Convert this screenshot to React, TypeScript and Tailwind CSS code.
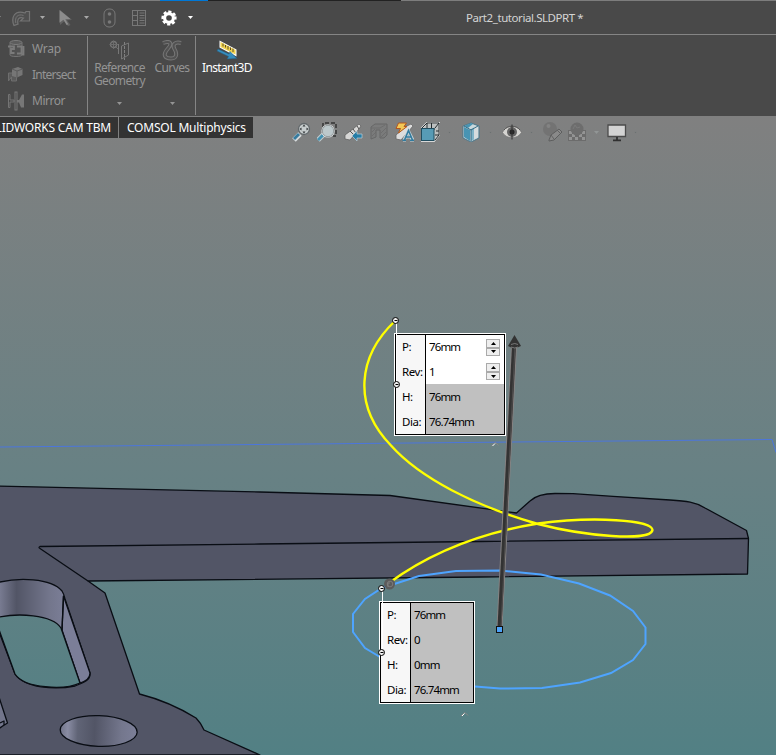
import React from "react";

type IconProps = { className?: string; children: React.ReactNode; w?: number; h?: number };

function Icon({ className = "", children, w = 20, h = 20 }: IconProps) {
  return (
    <svg width={w} height={h} viewBox={`0 0 ${w} ${h}`} className={`block shrink-0 ${className}`} fill="none">
      {children}
    </svg>
  );
}

function Caret({ className = "" }: { className?: string }) {
  return (
    <Icon w={5} h={3} className={className}>
      <path d="M0 0h5L2.5 3z" fill="currentColor" />
    </Icon>
  );
}

function QuickAccess() {
  return (
    <div className="flex h-full w-[220px] items-center">
      <div className="w-[1px] shrink-0 overflow-hidden text-[#999]"><Caret className="-ml-1" /></div>
      <Icon className="ml-[10px]">
        <path d="M3 17.500C-.5 9 4 1.500 14 5l1-1.500h3.500v9.500h-9l3-3C8 8.500 6 11 7 16z" fill="#505050" stroke="#747474" strokeWidth="1.200" />
        <path d="M4.800 15C3.500 9 7 5.500 12.500 7.500" stroke="#747474" />
      </Icon>
      <Caret className="ml-[9px] text-[#a8a8a8]" />
      <Icon className="ml-[11px]">
        <path d="M4 2l12 10-5 .2 3.500 4.800-2.500 1.300-3.300-5.300L4 17z" fill="#626262" />
        <path d="M3.500 2l11 9-5.200.2 3 5-1.700.8-3.200-5.200-3.900 3z" fill="#8c8c8c" />
      </Icon>
      <Caret className="ml-[8px] text-[#a8a8a8]" />
      <Icon className="ml-[11px]">
        <rect x="4" y="1" width="11" height="18" rx="5" stroke="#797979" />
        <circle cx="9.500" cy="6" r="1.800" fill="#797979" />
        <circle cx="9.500" cy="14" r="1.800" fill="#797979" />
      </Icon>
      <Icon className="ml-[10px]">
        <rect x="2.500" y="2.500" width="13" height="15" stroke="#777" />
        <path d="M7.500 2v16M3 7.500h5M3 12.500h5M9.500 5h5M9.500 7.500h5M9.500 10h5M9.500 12.500h5M9.500 15h5" stroke="#777" />
      </Icon>
      <Icon className="ml-[9px]">
        <circle cx="10" cy="10" r="6" fill="#fff" />
        <circle cx="10" cy="10" r="6.400" stroke="#fff" strokeWidth="2.400" strokeDasharray="3 2.027" transform="rotate(-13 10 10)" />
        <circle cx="10" cy="10" r="2.800" fill="#444" />
      </Icon>
      <Caret className="ml-[9px] text-white" />
    </div>
  );
}

function WrapIcon() {
  return (
    <Icon>
      <path d="M4 4v12c0 2 12 2 12 0V4" stroke="#747474" fill="#525252" />
      <ellipse cx="10" cy="3.500" rx="6" ry="2" stroke="#7c7c7c" fill="#5c5c5c" />
      <path d="M2 7.500h6v2.500H5v4h3.500M11 7.500h4.500v7H11M17.500 7v8.500h-2" stroke="#7b7b7b" strokeWidth="1.800" />
    </Icon>
  );
}

function IntersectIcon() {
  return (
    <Icon>
      <path d="M2.500 8h8v8h-5v-4l-3 4z" fill="#5b5b5b" stroke="#6e6e6e" />
      <path d="M6 4l6-2 4.500 2v6L11 12.500 6 11z" fill="#767676" />
      <path d="M6 4l5 2v6.500M11 6l5.500-2" stroke="#5a5a5a" />
    </Icon>
  );
}

function MirrorIcon() {
  return (
    <Icon>
      <path d="M2.500 3.500h1.500V9h4v2H4v5.500H2.500z" stroke="#747474" />
      <rect x="9" y="1" width="2" height="18" stroke="#797979" />
      <path d="M18 3.500v13h-3l-2-5h-2V9h2l3-5.500z" fill="#777" />
    </Icon>
  );
}

function ReferenceIcon() {
  return (
    <Icon w={22} h={21}>
      <circle cx="4.500" cy="4.500" r="3" stroke="#777" strokeWidth="1.300" />
      <path d="M0.500 4.500h8.500M4.500 0.500v8.500M7 7l3 3" stroke="#6c6c6c" />
      <path d="M9.500 4v10M19.500 3v12l-7 4V6z" stroke="#777" />
      <path d="M15.500 2v18" stroke="#808080" strokeDasharray="3 1" />
    </Icon>
  );
}

function CurvesIcon() {
  const curve = "M2 3C10 0 11 4 7 8.500C1 15 4 18.500 10 18.500C17 18.500 15.500 12 13.500 9C11 4.500 14 1.500 20 3";
  return (
    <Icon w={22} h={21}>
      <path d={curve} stroke="#777" strokeWidth="4" />
      <path d={curve} stroke="#525252" strokeWidth="2" />
    </Icon>
  );
}

function InstantIcon() {
  return (
    <Icon w={22} h={21}>
      <path d="M3.500 .5l17 9v7l-17-9z" fill="#fff" />
      <path d="M4.500 2L19.500 10v4.500L4.500 7z" fill="#f0d34f" />
      <path d="M7 3.500v3M9.500 5v2.500M12 6v3.500M14.500 7.500V10M17 8.500V12" stroke="#604e24" />
      <path d="M2 9l11 5 1-2.500 7 7-10 .5 1.500-2.500L1 11z" fill="#368dbd" stroke="#235d80" strokeWidth=".5" />
    </Icon>
  );
}

function Ribbon() {
  return (
    <div className="flex h-[81px] shrink-0 bg-[#494949] text-[#949494]">
      <div className="my-[1px] flex w-[88px] flex-col border-r border-[#858585] text-[12px]">
        {[
          { label: "Wrap", icon: <WrapIcon />, tracking: "tracking-[-0.25px]" },
          { label: "Intersect", icon: <IntersectIcon />, tracking: "tracking-[-0.75px]" },
          { label: "Mirror", icon: <MirrorIcon />, tracking: "tracking-[-0.5px]" },
        ].map((item) => (
          <div key={item.label} className="flex h-[26px] items-center gap-[6px] pl-[6px]">
            {item.icon}
            <span className={`leading-4 ${item.tracking}`}>{item.label}</span>
          </div>
        ))}
      </div>
      <div className="my-[1px] flex w-[108px] border-r border-[#858585] text-center text-[12px] leading-[13px]">
        <div className="flex w-[63px] flex-col items-center pt-[4px]">
          <ReferenceIcon />
          <div className="tracking-[-0.65px]">Reference</div>
          <div className="tracking-[-0.65px]">Geometry</div>
          <Caret className="mt-[15px]" />
        </div>
        <div className="flex w-[42px] flex-col items-center pt-[4px]">
          <CurvesIcon />
          <div className="tracking-[-0.6px]">Curves</div>
          <Caret className="mt-[28px]" />
        </div>
      </div>
      <div className="flex w-[62px] flex-col items-center pt-[5px] text-[12px] leading-[13px] text-white">
        <InstantIcon />
        <span className="tracking-[-0.65px]">Instant3D</span>
      </div>
    </div>
  );
}

function HeadsUpToolbar() {
  return (
    <div className="flex items-center">
      <Icon className="ml-[38px]">
        <path d="M3 18l6-6" stroke="#d6dbdd" strokeWidth="5" />
        <path d="M3 17l5-5" stroke="#387b9e" strokeWidth="3" />
        <circle cx="13" cy="7" r="5.500" fill="#c6cccd" stroke="#62686b" strokeWidth="1.300" />
        <path d="M13 2.500l1.500 2h-3zM13 11.500l1.500-2h-3zM8.500 7l2-1.500v3zM17.500 7l-2-1.500v3z" fill="#303538" />
      </Icon>
      <Icon className="ml-[6px]">
        <path d="M6 5V1h13v13h-3" stroke="#333" strokeDasharray="4 2" strokeWidth="1.500" />
        <path d="M1 18l6-6" stroke="#c4cdd0" strokeWidth="5" />
        <path d="M1 18l5-5" stroke="#4391b1" strokeWidth="3" />
        <circle cx="11" cy="9" r="6" fill="#bcc8cb" stroke="#e3e7e8" strokeWidth="1.200" />
        <circle cx="11" cy="9" r="5.700" stroke="#737b7e" strokeWidth=".7" />
      </Icon>
      <Icon className="ml-[6px]">
        <path d="M2 13l8-6 6-5 2 2-5 7-6 7-5-1z" fill="#d6d6d5" stroke="#595959" strokeWidth=".7" />
        <path d="M7 9l4 4M10 7l3 4M14 4l2 3" stroke="#505050" />
        <path d="M9 14l5-5v3h5v4h-5v3z" fill="#257da6" stroke="#b9ced8" strokeWidth=".7" />
      </Icon>
      <Icon className="ml-[6px] opacity-50">
        <path d="M2 5l4-3h12v11l-3 3h-4V8H7v7l-5 2z" fill="#777" stroke="#4f4f4f" />
        <path d="M2 6h9l5-3M12 15l5-5M12 11l5-5M3 14l4-4M3 10l3-3" stroke="#555" strokeWidth=".8" />
      </Icon>
      <Icon className="ml-[5px]">
        <path d="M2 13l9-8 6-3 2 2-5 6-7 8-5-1z" fill="#ddd" stroke="#666" strokeWidth=".8" />
        <path d="M4.500 1h8L10 4.500h3l-8.500 6.500 2-4.500H2z" fill="#f3c857" stroke="#b3571f" />
        <path d="M10 18l4.500-9 4.500 9M11 15h6M9 18h3M16 18h4" stroke="#c6d4da" strokeWidth="3" />
        <path d="M10.500 18l4-9.500L18.500 18M12 15h5M8.500 18.300h3.500M16 18.300h4" stroke="#327b9e" strokeWidth="1.600" />
      </Icon>
      <Icon className="ml-[6px]">
        <path d="M2 6l5-5h12v12l-5 6H2z" fill="#bcc0c0" stroke="#d8d8d8" strokeWidth="2" />
        <path d="M2 6l5-5h12v12l-4 5M7 1v5M7 7h8M15 6l4-5M11.500 1v5M16 9h3M15 13h4" stroke="#242c2f" />
        <rect x="1.500" y="6.500" width="12.500" height="12" fill="#579bb5" stroke="#214e60" />
      </Icon>
      <Caret className="ml-[7px] scale-50 text-[#696f70]" />
      <Icon className="ml-[9px]">
        <path d="M2 4l8-3 8 3v12l-8 4-8-4z" fill="#cbd8dc" stroke="#4a7589" />
        <path d="M3 5l6 3v11l-6-4zM3 4l7-3 2 1-5 4z" fill="#4894b3" />
        <path d="M10 8l7-4v11l-7 4z" fill="#d7dcde" />
        <path d="M10 7l3-1.500v12L10 19z" fill="#7fb3c8" />
        <path d="M10 7v12M3 4l7 4 7-4" stroke="#376d84" />
      </Icon>
      <Caret className="ml-[7px] scale-50 text-[#696f70]" />
      <Icon className="ml-[9px]">
        <path d="M.5 10.500c4-8.500 15-8.500 19 0-4 7-15 7-19 0z" fill="#d5d4d1" stroke="#707070" strokeWidth=".7" />
        <path d="M2 8c4-5 12-5 16 0" stroke="#555" />
        <circle cx="10" cy="10" r="5" fill="#656565" />
        <circle cx="10" cy="10" r="2.500" fill="#252525" />
        <path d="M10 2.500v15" stroke="#303030" />
      </Icon>
      <Caret className="ml-[7px] scale-50 text-[#696f70]" />
      <Icon className="ml-[8px] opacity-70">
        <circle cx="8" cy="7" r="7" fill="#6e6e6e" />
        <circle cx="6.500" cy="4" r="2" fill="#858585" />
        <path d="M7 18l2-5 8-6 3 3-8 8-5 1z" fill="#8e8e8e" stroke="#505050" />
        <path d="M9 13l3 4M15 8l3 3" stroke="#555" />
      </Icon>
      <Icon className="ml-[5px] opacity-75">
        <path d="M1 8h18v11H1z" fill="#666" />
        <path d="M2 9h3v3H2zM5 12h3v3H5zM2 15h3v3H2zM8 15h3v3H8zM15 9h3v3h-3zM12 12h3v3h-3zM15 15h3v3h-3z" fill="#9b9b9b" />
        <circle cx="10" cy="7" r="6.500" fill="#676767" />
        <path d="M6 7l2-4 2 3 3-1" stroke="#797979" />
      </Icon>
      <Caret className="ml-[7px] text-[#929696]" />
      <Icon className="ml-[8px]">
        <path d="M1 3h17.500v11.500H1z" fill="#d3d3d3" stroke="#4b4b4b" strokeWidth="1.300" />
        <path d="M10 15v3M6 18.300h8" stroke="#303030" strokeWidth="1.800" />
      </Icon>
      <Caret className="ml-[6px] scale-50 text-[#696f70]" />
    </div>
  );
}

function Scene() {
  return (
    <svg className="absolute inset-0" width="776" height="639" viewBox="0 116 776 639" fill="none">
      <defs>
        <linearGradient id="slot" x1="0" x2="66" y1="0" y2="0" gradientUnits="userSpaceOnUse">
          <stop offset="0" stopColor="#787b91" />
          <stop offset=".25" stopColor="#525566" />
          <stop offset=".75" stopColor="#73768c" />
          <stop offset="1" stopColor="#7c7f98" />
        </linearGradient>
        <linearGradient id="hole" x1="60" x2="137" y1="0" y2="0" gradientUnits="userSpaceOnUse">
          <stop offset="0" stopColor="#707388" />
          <stop offset=".1" stopColor="#898ca3" />
          <stop offset=".23" stopColor="#606476" />
          <stop offset=".45" stopColor="#525566" />
          <stop offset=".8" stopColor="#74778d" />
          <stop offset="1" stopColor="#7c7f98" />
        </linearGradient>
        <linearGradient id="backdrop" x1="0" x2="0" y1="116" y2="755" gradientUnits="userSpaceOnUse">
          <stop stopColor="#808080" />
          <stop offset=".55" stopColor="#688184" />
          <stop offset="1" stopColor="#528084" />
        </linearGradient>
      </defs>
      <path d="M0 447L772 439.500l4 13" stroke="#4c76dc" />

      {/* Solid body with its front edge */}
      <g stroke="#090d14" strokeWidth="1.300" strokeLinejoin="round">
        <path
          fill="#525566"
          d="M-2 486L260 492 390 495.500 516.500 513 530 501Q538 493.500 555 493.500L573 493.700 613 496.300 670 500C686 501 696 502 705 508L746.500 530.500 748.500 538.500 747.500 574 480 577 88 581 105 593 139.500 694C163 700 183 710 196 718Q201 723 204 730L260 755H-2z"
        />
        <path d="M748.500 538.500L480 541.500 260 544 40 546.500Q38 547.500 40 548.500L88 581" />
        <path
          fill="url(#slot)"
          d="M-4 583C18 577 51 578 62 591Q64 594 65 599L90 673C91 680 83 683 75 686C55 690 25 688 15 674L-4 624z"
        />
        <path fill="#7b7e98" d="M63.500 596L90 673Q90 680 80 683L62 630z" />
        <path
          fill="url(#backdrop)"
          d="M-3 617.500C17 613 52 614 61 628L80 683C65 690 25 689 15 674L-3 624z"
        />
        <path d="M63.500 596L62 630" />
        <ellipse cx="98.700" cy="731" rx="38.500" ry="15.300" fill="url(#hole)" transform="rotate(2 98.700 731)" />
        <path fill="#72758b" d="M-2 694L7.500 723-2 729zM0 723l4-2v4l-4 3" />
      </g>

      {/* Base circle */}
      <path
        d="M380 657L365 648 353 632 353 614 365 599 382 588 419 576 456 571 500 570.500 541 574.500 579 583.500 610 595.500 633 611 645.500 627.500 645.500 644 633 660 611 673 580 682.500 542 688 500 688.500 475 686.500"
        stroke="#4ea4ff"
        strokeWidth="2"
      />
      {/* Helix */}
      <path
        d="M395 321C358 356 352 405 391 445.500C420 478 475 506 538 524C584 536 651 542 652.500 530C652 520 594 516 538 523.500C480 533 430 553 389 583"
        stroke="#ffff00"
        strokeWidth="2.400"
      />
      <circle cx="389.500" cy="584" r="5.500" fill="#5c5b5b" />
      <circle cx="390" cy="584" r="2.800" stroke="#858383" strokeWidth=".8" />
      <path d="M388 587v-4h2" stroke="#858383" strokeWidth=".8" />

      {/* Axis arrow */}
      <path d="M499.500 627L514 346" stroke="#858282" strokeWidth="6" />
      <path d="M499.500 627L514 346" stroke="#333333" strokeWidth="4" />
      <path d="M501 627L515 346" stroke="#504e4e" />
      <path d="M514.500 335L521 346Q514 350 508 346z" fill="#333" />
      <path d="M511 344.500q4-2 7 0M511 347q4 2 7 0" stroke="#888" strokeWidth=".8" />
      <rect x="496.500" y="626.500" width="6" height="6" fill="#4ca3fa" stroke="#111" />
      <path d="M491.500 446l4-3.500 3 3M461 716l4-3.500 3 3" stroke="#8a8583" />
      <path d="M492.500 446l2.500-2.500M462 716l2.500-2.500" stroke="#fff" />
    </svg>
  );
}

function Stepper() {
  const part = "flex w-[14px] items-center justify-center border border-[#aaa] bg-[#eee] text-black";
  return (
    <div className="ml-auto mr-[4px] flex flex-col">
      <div className={`h-[9px] ${part}`}><Caret className="rotate-180" /></div>
      <div className={`h-[8px] ${part}`}><Caret /></div>
    </div>
  );
}

type Row = { label: string; value: string; editable?: boolean };

function Callout({ rows, className }: { rows: Row[]; className: string }) {
  return (
    <div className={`absolute h-[103px] border border-white bg-black p-px ${className}`}>
      <div className="grid h-[99px] grid-rows-[24px_25px_25px_25px] text-[11.500px] leading-4 text-black">
        {rows.map((row) => (
          <div key={row.label} className="flex gap-px">
            <div className="flex w-[29px] shrink-0 items-center bg-[#f7f7f7] pl-[6px] tracking-[-0.4px]">{row.label}</div>
            <div className={`flex grow items-center pl-[3px] tracking-[-0.85px] ${row.editable ? "bg-white" : "bg-[#c0c0c0]"}`}>
              {row.value}
              {row.editable && <Stepper />}
            </div>
          </div>
        ))}
      </div>
    </div>
  );
}

function Leaders() {
  return (
    <svg className="absolute inset-0" width="776" height="639" viewBox="0 116 776 639" fill="none">
      <path d="M396.500 321v62M382.500 589v62" stroke="#fff" />
      {[[395.5, 320.5], [396.5, 384.5], [381.5, 588.5], [381.5, 652.5]].map(([x, y]) => (
        <g key={`${x}-${y}`}>
          <circle cx={x} cy={y} r="3" fill="#eee" stroke="#000" />
          <path d={`M${x - 1} ${y}h3`} stroke="#000" />
        </g>
      ))}
    </svg>
  );
}

export default function App() {
  return (
    <div className="flex h-[755px] w-[776px] flex-col overflow-hidden bg-[#494949] font-['Noto_Sans','Open_Sans',sans-serif]">
      <div className="flex h-px shrink-0 bg-[#7d7d7d]">
        <div className="w-[160px]" />
        <div className="w-[48px] bg-[#0078d7]" />
        <div className="w-[193px] bg-[#222]" />
      </div>
      <div className="flex h-[34px] shrink-0 items-center border-b border-[#858585]">
        <QuickAccess />
        <span className="ml-[246px] text-[11.500px] tracking-[-0.43px] text-[#d4d4d4]">Part2_tutorial.SLDPRT *</span>
      </div>
      <Ribbon />
      <div className="relative h-[639px] bg-linear-to-b from-[#808080] via-[#688184] via-55% to-[#528084]">
        <Scene />
        <div className="relative flex h-[32px]">
          <div className="mt-px flex h-[21px] w-[253px] gap-px text-[12px] leading-[21px] text-white">
            <div className="flex w-[118px] justify-end overflow-hidden whitespace-nowrap bg-[#333] pr-[7px] tracking-[-0.2px]">SOLIDWORKS CAM TBM</div>
            <div className="w-[134px] whitespace-nowrap bg-[#333] pl-[8px] tracking-[-0.22px]">COMSOL Multiphysics</div>
          </div>
          <HeadsUpToolbar />
        </div>
        <Callout
          className="left-[394px] top-[217px] w-[112px]"
          rows={[
            { label: "P:", value: "76mm", editable: true },
            { label: "Rev:", value: "1", editable: true },
            { label: "H:", value: "76mm" },
            { label: "Dia:", value: "76.74mm" },
          ]}
        />
        <Callout
          className="left-[379px] top-[485px] w-[96px]"
          rows={[
            { label: "P:", value: "76mm" },
            { label: "Rev:", value: "0" },
            { label: "H:", value: "0mm" },
            { label: "Dia:", value: "76.74mm" },
          ]}
        />
        <Leaders />
      </div>
    </div>
  );
}
